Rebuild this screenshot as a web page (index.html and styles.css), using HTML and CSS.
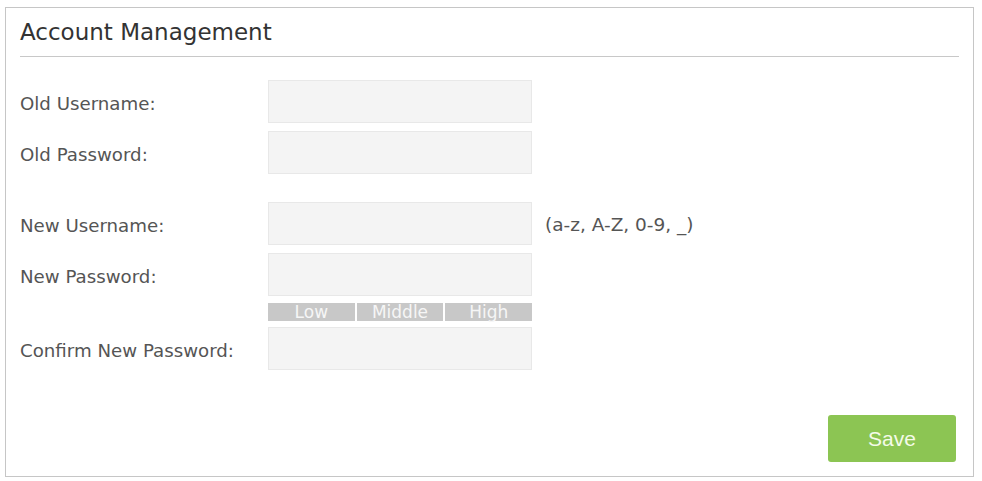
FILE: index.html
```html
<!DOCTYPE html>
<html lang="en">
<head>
  <meta charset="UTF-8">
  <title>Account Management</title>
  <link rel="stylesheet" href="styles.css">
</head>
<body>
  <div class="panel">
    <h2 class="panel-title">Account Management</h2>
    <form class="account-form">
      <div class="group">
        <div class="row">
          <label>Old Username:</label>
          <input type="text" class="field">
        </div>
        <div class="row">
          <label>Old Password:</label>
          <input type="password" class="field">
        </div>
      </div>
      <div class="group">
        <div class="row">
          <label>New Username:</label>
          <input type="text" class="field">
          <span class="hint">(a-z, A-Z, 0-9, _)</span>
        </div>
        <div class="row">
          <label>New Password:</label>
          <input type="password" class="field">
        </div>
        <div class="row strength-row">
          <span class="spacer"></span>
          <div class="strength">
            <span>Low</span>
            <span>Middle</span>
            <span>High</span>
          </div>
        </div>
        <div class="row">
          <label>Confirm New Password:</label>
          <input type="password" class="field">
        </div>
      </div>
      <div class="actions">
        <button type="button" class="btn-save">Save</button>
      </div>
    </form>
  </div>
</body>
</html>
```

FILE: styles.css
```css
body {
  margin: 0;
  background-color: #fff;
  font-family: "DejaVu Sans", Verdana, sans-serif;
  color: #555;
}

.panel {
  margin: 7px 8px 5px 5px;
  height: 470px;
  box-sizing: border-box;
  border: 1px solid #c6c6c6;
  padding: 0 17px 0 14px;
  display: flex;
  flex-direction: column;
}

.panel-title {
  margin: 0 -3px 0 0;
  padding: 11px 0 11px;
  font-size: 23px;
  font-weight: normal;
  line-height: 26px;
  color: #333;
  border-bottom: 1px solid #c8c8c8;
}

.account-form {
  flex: 1;
  display: flex;
  flex-direction: column;
  padding-top: 23px;
}

.group {
  display: flex;
  flex-direction: column;
  gap: 7.5px;
}

.group + .group {
  margin-top: 28.5px;
}

.row {
  display: flex;
  align-items: center;
}

.row label,
.row .spacer {
  width: 248px;
  padding-top: 4px;
  font-size: 18.2px;
  color: #555;
}

.field {
  width: 264px;
  height: 43px;
  box-sizing: border-box;
  margin: 0;
  border: 1px solid #e8e8e8;
  background-color: #f4f4f4;
  outline: none;
}

.hint {
  margin-left: 13px;
  padding-top: 2px;
  font-size: 18.5px;
  color: #555;
}

.strength-row {
  margin-top: -0.5px;
  margin-bottom: -1.5px;
}

.strength-row .spacer {
  padding-top: 0;
}

.strength {
  width: 264px;
  height: 18px;
  display: flex;
  gap: 2px;
}

.strength span {
  flex: 1;
  background-color: #c8c8c8;
  color: #f6f6f6;
  font-size: 17px;
  line-height: 18px;
  text-align: center;
}

.actions {
  margin-top: auto;
  margin-bottom: 14px;
  display: flex;
  justify-content: flex-end;
}

.btn-save {
  width: 128px;
  height: 47px;
  border: none;
  border-radius: 3px;
  background-color: #8cc553;
  color: #f4fbe9;
  font-family: "Liberation Sans", Arial, sans-serif;
  font-size: 21px;
  cursor: pointer;
}
```
